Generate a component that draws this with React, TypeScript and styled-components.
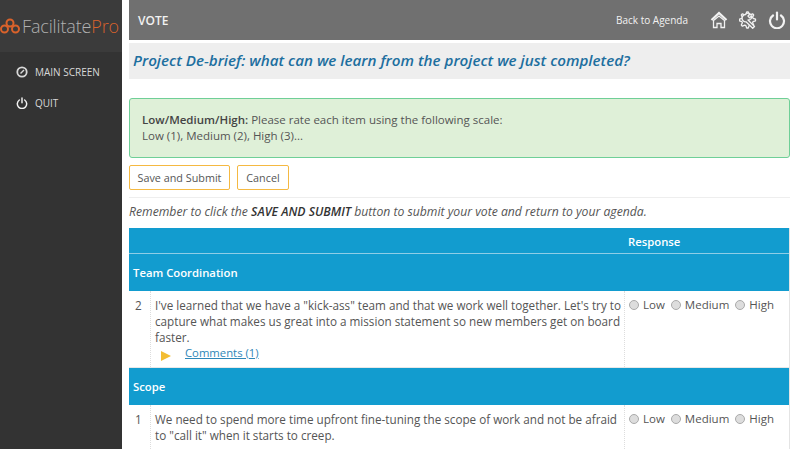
import * as React from 'react';
import styled, { createGlobalStyle } from 'styled-components';

const GlobalStyle = createGlobalStyle`
  html, body {
    margin: 0;
    height: 449px;
    overflow: hidden;
    background: #fff;
    font-family: "Open Sans", "Liberation Sans", sans-serif;
    color: #555;
  }
  * { box-sizing: border-box; }
`;

const Page = styled.div`
  display: flex;
  width: 799px;
  height: 449px;
  overflow: hidden;
`;

const Sidebar = styled.aside`
  width: 122px;
  flex: none;
  background: #333;
`;

const Logo = styled.div`
  height: 52px;
  display: flex;
  align-items: center;
  gap: 2px;
  background: #3b3b3b;
  font-size: 18px;
  font-weight: 300;
  color: #b0b0b0;
  letter-spacing: -0.15px;
  white-space: nowrap;
  span { color: #d9622b; }
`;

const Nav = styled.nav`
  display: flex;
  flex-direction: column;
  gap: 14px;
  padding: 11px 0 0 16px;
`;

const NavItem = styled.div`
  display: flex;
  align-items: center;
  gap: 7px;
  height: 17px;
  font-size: 10px;
  color: #d8d8d8;
`;

const Main = styled.main`
  width: 661px;
  margin-left: 7px;
  flex: none;
`;

const TopBar = styled.header`
  height: 40px;
  background: #707070;
  display: flex;
  align-items: center;
  padding: 0 4px 0 9px;
  color: #f2f2f2;
`;

const TopTitle = styled.div`
  flex: 1;
  font-size: 12px;
  font-weight: 600;
`;

const BackLink = styled.a`
  font-size: 10px;
  margin-right: 22px;
`;

const TopIcons = styled.div`
  display: flex;
  align-items: center;
  gap: 11px;
`;

const TitleBand = styled.h1`
  margin: 3px 0 0;
  height: 36px;
  display: flex;
  align-items: center;
  padding: 0 0 2px 4px;
  background: #eee;
  font-size: 15.2px;
  font-weight: 600;
  font-style: italic;
  color: #1d6f9f;
  white-space: nowrap;
`;

const Alert = styled.div`
  margin-top: 19px;
  height: 60px;
  padding: 13px 12px;
  background: #dff0d8;
  border: 1px solid #6fcf97;
  border-radius: 3px;
  font-size: 11.5px;
  line-height: 16px;
  b { font-weight: 600; color: #444; }
`;

const Actions = styled.div`
  display: flex;
  gap: 7px;
  margin-top: 7px;
  padding-bottom: 7px;
  border-bottom: 1px solid #eee;
`;

const Button = styled.button<{ $width: number }>`
  width: ${(p) => p.$width}px;
  height: 25px;
  padding: 0;
  background: #fff;
  border: 1px solid #f5b942;
  border-radius: 2px;
  font: 10.8px "Open Sans", sans-serif;
  color: #555;
`;

const Reminder = styled.p`
  margin: 6px 0 0;
  height: 24px;
  font-size: 12.2px;
  line-height: 16px;
  font-style: italic;
  white-space: nowrap;
  b { font-weight: 600; color: #333; }
`;

const Table = styled.div`
  border-right: 1px solid #e4e4e4;
`;

const HeadRow = styled.div`
  display: flex;
  height: 26px;
  padding: 1px 0 0 499px;
  background: #129ccf;
  border-bottom: 1px solid #8fcde6;
  font-size: 11.3px;
  font-weight: 600;
  color: #fff;
  align-items: center;
`;

const GroupRow = styled.div`
  height: 37px;
  display: flex;
  align-items: center;
  padding: 0 0 1px 4px;
  background: #129ccf;
  font-size: 11.3px;
  font-weight: 600;
  color: #fff;
`;

const ItemRow = styled.div`
  display: grid;
  grid-template-columns: 22px 474px 1fr;
  height: 77px;
  font-size: 11.7px;
  line-height: 16px;
  border-bottom: 1px solid #e8e8e8;
`;

const Num = styled.div`
  padding: 6px 0 0 6px;
  border-right: 1px dotted #ddd;
`;

const ItemText = styled.div`
  padding: 6px 2px 0 4px;
  border-right: 1px dotted #ddd;
`;

const CommentLine = styled.div`
  display: flex;
  align-items: center;
  padding-left: 6px;
  gap: 14px;
  font-size: 11.3px;
  a {
    color: #2f87b8;
    text-decoration: underline;
  }
`;

const Triangle = styled.span`
  width: 0;
  height: 0;
  margin-top: 6px;
  border-left: 10px solid #f3bd33;
  border-top: 5px solid transparent;
  border-bottom: 5px solid transparent;
`;

const Options = styled.div`
  display: flex;
  gap: 6px;
  padding: 6px 0 0 4px;
  font-size: 11.5px;
`;

const Option = styled.label`
  display: flex;
  align-items: center;
  gap: 4px;
  height: 16px;
`;

const Radio = styled.span`
  width: 10px;
  height: 10px;
  border-radius: 50%;
  background: #ddd;
  border: 1px solid #aaa;
`;

const HomeIcon = () => (
  <svg width="18" height="18" viewBox="0 0 18 18" fill="none" stroke="#f2f2f2">
    <path d="M1.500 9 9 2l7.500 7" strokeWidth="2.200" />
    <path d="M3.500 9.500 9 5l5.500 4.500V16.500H11v-4H7v4H3.500Z" strokeWidth="1.300" />
  </svg>
);

// gear outline: 8 teeth, alternating radii every 11.25deg
const gearPoints = Array.from({ length: 32 }, (_, i) => {
  const r = i % 4 < 2 ? 8 : 5.8;
  const a = ((i * 11.25 - 5.6) * Math.PI) / 180;
  return `${(8.5 + r * Math.cos(a)).toFixed(1)},${(9 + r * Math.sin(a)).toFixed(1)}`;
}).join(' ');

const ToolsIcon = () => (
  <svg width="18" height="18" viewBox="0 0 18 18" fill="none" stroke="#f2f2f2" strokeWidth="1.300" strokeLinejoin="round">
    <polygon points={gearPoints} />
    <path
      d="M6.500 3.500a3.600 3.600 0 0 1 4.500-.8L9 5l1.500 1.800 2.300-2a3.600 3.600 0 0 1-3.800 4.200l6.500 6.500-1.800 1.800L7 10.800A3.600 3.600 0 0 1 6.500 3.500Z"
      fill="#707070"
    />
  </svg>
);

const PowerIcon = ({ size, color }: { size: number; color: string }) => (
  <svg width={size} height={size} viewBox="0 0 18 18" fill="none" stroke={color} strokeWidth="2.200" strokeLinecap="round">
    <path d="M5 4.500a7 7 0 1 0 8 0" />
    <path d="M9 1.500V8.500" />
  </svg>
);

const GaugeIcon = () => (
  <svg width="12" height="12" viewBox="0 0 12 12" fill="none" stroke="#d8d8d8">
    <circle cx="6" cy="6" r="4.700" strokeWidth="1.800" />
    <path d="M4.500 7.500 8 4" strokeWidth="1.400" />
  </svg>
);

const LogoMark = () => (
  <svg width="20" height="16" viewBox="0 0 20 16" fill="none" stroke="#d9622b" strokeWidth="2">
    <circle cx="10" cy="5" r="3.500" />
    <circle cx="4.500" cy="11" r="3.500" />
    <circle cx="15.500" cy="11" r="3.500" />
  </svg>
);

const Response = () => (
  <Options>
    {['Low', 'Medium', 'High'].map((label) => (
      <Option key={label}>
        <Radio />
        {label}
      </Option>
    ))}
  </Options>
);

export default function App() {
  return (
    <>
      <GlobalStyle />
      <Page>
        <Sidebar>
          <Logo>
            <LogoMark />
            <div>
              Facilitate<span>Pro</span>
            </div>
          </Logo>
          <Nav>
            <NavItem>
              <GaugeIcon />
              MAIN SCREEN
            </NavItem>
            <NavItem>
              <PowerIcon size={12} color="#f2f2f2" />
              QUIT
            </NavItem>
          </Nav>
        </Sidebar>
        <Main>
          <TopBar>
            <TopTitle>VOTE</TopTitle>
            <BackLink>Back to Agenda</BackLink>
            <TopIcons>
              <HomeIcon />
              <ToolsIcon />
              <PowerIcon size={18} color="#f2f2f2" />
            </TopIcons>
          </TopBar>
          <TitleBand>Project De-brief: what can we learn from the project we just completed?</TitleBand>
          <Alert>
            <b>Low/Medium/High:</b> Please rate each item using the following scale:
            <br />
            Low (1), Medium (2), High (3)...
          </Alert>
          <Actions>
            <Button $width={101}>Save and Submit</Button>
            <Button $width={52}>Cancel</Button>
          </Actions>
          <Reminder>
            Remember to click the <b>SAVE AND SUBMIT</b> button to submit your vote and return to your agenda.
          </Reminder>
          <Table>
            <HeadRow>Response</HeadRow>
            <GroupRow>Team Coordination</GroupRow>
            <ItemRow>
              <Num>2</Num>
              <ItemText>
                I've learned that we have a "kick-ass" team and that we work well together. Let's try to capture what
                makes us great into a mission statement so new members get on board faster.
                <CommentLine>
                  <Triangle />
                  <a>Comments (1)</a>
                </CommentLine>
              </ItemText>
              <Response />
            </ItemRow>
            <GroupRow>Scope</GroupRow>
            <ItemRow>
              <Num>1</Num>
              <ItemText>
                We need to spend more time upfront fine-tuning the scope of work and not be afraid to "call it" when it
                starts to creep.
              </ItemText>
              <Response />
            </ItemRow>
          </Table>
        </Main>
      </Page>
    </>
  );
}
